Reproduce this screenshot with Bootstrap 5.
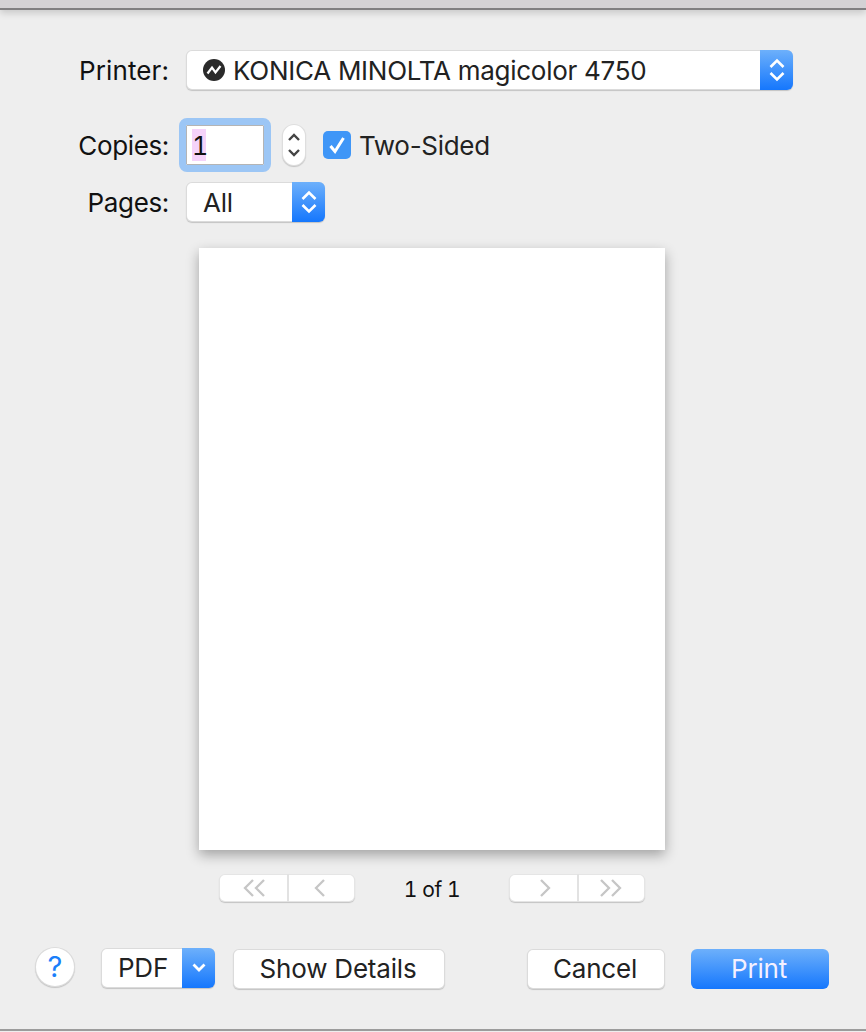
<!DOCTYPE html>
<html lang="en">
  <head>
    <meta charset="UTF-8" />
    <meta name="viewport" content="width=device-width, initial-scale=1.0" />
    <link href="https://cdn.jsdelivr.net/npm/bootstrap@5.3.2/dist/css/bootstrap.min.css" rel="stylesheet" />
    <title>Print</title>
    <style>
      html, body { height: 100%; }
      body {
        background: #eeeeee;
        color: #222;
        font-family: Inter, "Liberation Sans", sans-serif;
        font-size: 26px;
        overflow: hidden;
      }
      .sheet { height: 1032px; }
      .title-strip {
        height: 10px;
        background: #d4d2d5;
        border-bottom: 2px solid #807f81;
        box-shadow: 0 3px 7px rgba(0, 0, 0, 0.16);
      }
      .form-rows { padding-top: 40px; }
      .field-label {
        width: 169px;
        text-align: right;
        color: #111;
        flex: none;
        margin-right: 17px;
        letter-spacing: -0.35px;
      }
      .label-wide { letter-spacing: 0.1px; }
      .row-printer { height: 40px; margin-bottom: 35px; }
      .row-copies { height: 40px; margin-bottom: 17px; }
      .row-pages { height: 40px; margin-bottom: 26px; }
      .mac-control {
        background: #fff;
        border-radius: 6px;
        box-shadow: inset 0 0 0 1px rgba(0, 0, 0, 0.14), 0 1px 1px rgba(0, 0, 0, 0.18);
        height: 40px;
      }
      .popup-wide { width: 607px; }
      .popup-small { width: 139px; }
      .popup-text { padding-left: 17px; letter-spacing: -0.27px; white-space: nowrap; }
      .blue-cap {
        width: 33px;
        background: linear-gradient(#6db0fb, #1577fd);
        border-radius: 0 6px 6px 0;
        flex: none;
      }
      .copies-wrap {
        width: 78px;
        height: 40px;
        background: #fff;
        border: 1px solid #b4b4b4;
        outline: 7px solid #9cc6f5;
        border-radius: 1px;
        padding-left: 5px;
      }
      .sel-one {
        background: #f5d3fa;
        width: 14px;
        height: 32px;
        line-height: 34px;
        color: #111;
        font-size: 25px;
        font-variant-numeric: tabular-nums;
        text-align: center;
        margin-top: 3px;
      }
      .stepper-box {
        width: 24px;
        height: 42px;
        margin-left: 18px;
        background: #fff;
        border-radius: 12px;
        box-shadow: inset 0 0 0 1px rgba(0, 0, 0, 0.13), 0 1px 1px rgba(0, 0, 0, 0.18);
      }
      .tick-box {
        width: 28px;
        height: 28px;
        background: #3f96f7;
        border-radius: 5px;
        margin-left: 17px;
        margin-right: 8px;
      }
      .two-sided { letter-spacing: -0.3px; }
      .paper {
        width: 466px;
        height: 602px;
        margin-left: 199px;
        background: #fff;
        box-shadow: 0 5px 12px rgba(0, 0, 0, 0.32);
      }
      .pager-row { margin-top: 24px; margin-left: 219px; height: 28px; }
      .pager-group {
        width: 136px;
        height: 28px;
        background: #fff;
        border-radius: 6px;
        box-shadow: inset 0 0 0 1px rgba(0, 0, 0, 0.1), 0 1px 1px rgba(0, 0, 0, 0.18);
      }
      .pager-cell { width: 50%; height: 100%; }
      .pager-cell + .pager-cell { border-left: 2px solid #e2e2e2; }
      .page-count {
        width: 154px;
        padding-top: 4px;
        text-align: center;
        font-size: 21px;
        font-variant-numeric: tabular-nums;
        color: #111;
        letter-spacing: -0.4px;
      }
      .footer-row { margin-top: 45px; height: 42px; padding-left: 35px; }
      .help-disc {
        width: 40px;
        height: 40px;
        background: #fff;
        color: #1a7ffa;
        border-radius: 50%;
        box-shadow: inset 0 0 0 1px rgba(0, 0, 0, 0.14), 0 1px 1px rgba(0, 0, 0, 0.18);
        font-size: 29px;
        line-height: 40px;
        text-align: center;
        margin-right: 26px;
      }
      .pdf-menu { width: 114px; margin-right: 18px; margin-top: 1px; }
      .pdf-label { flex: 1; padding-left: 3px; padding-bottom: 1px; text-align: center; letter-spacing: -0.2px; }
      .push-btn {
        height: 40px;
        background: #fff;
        border: 0;
        border-radius: 6px;
        color: #222;
        padding: 0 2px 2px 0;
        font-size: 26px;
        letter-spacing: -0.2px;
        box-shadow: inset 0 0 0 1px rgba(0, 0, 0, 0.14), 0 1px 1px rgba(0, 0, 0, 0.18);
      }
      .btn-details { width: 212px; margin-top: 2px; }
      .btn-cancel { width: 138px; margin-left: 82px; margin-top: 2px; }
      .btn-print {
        width: 138px;
        margin-left: 26px;
        margin-top: 2px;
        color: #f4f0ff;
        background: linear-gradient(#6db0fb, #1577fd);
        box-shadow: none;
      }
      .bottom-line { height: 2px; background: #9c9c9c; margin-top: 40px; }
    </style>
  </head>

  <body>
    <div class="sheet d-flex flex-column">
      <div class="title-strip"></div>

      <div class="form-rows">
        <div class="row-printer d-flex align-items-center">
          <div class="field-label label-wide">Printer:</div>
          <div class="mac-control popup-wide d-flex align-items-stretch">
            <div class="flex-grow-1 d-flex align-items-center popup-text">
              <svg class="me-2 flex-shrink-0" width="22" height="22" viewBox="0 0 22 22">
                <circle cx="11" cy="11" r="11" fill="#2a2a2a" />
                <path d="M4.5 14.5 9 8.5l3.5 5L17.5 7" fill="none" stroke="#fff" stroke-width="2.2" />
              </svg>
              <span>KONICA MINOLTA magicolor 4750</span>
            </div>
            <div class="blue-cap d-flex align-items-center justify-content-center">
              <svg width="16" height="26" viewBox="0 0 16 26">
                <path d="M1.5 10 8 3.5l6.5 6.5M1.5 16 8 22.5l6.5-6.5" fill="none" stroke="#fff" stroke-width="2.6" />
              </svg>
            </div>
          </div>
        </div>

        <div class="row-copies d-flex align-items-center">
          <div class="field-label">Copies:</div>
          <div class="copies-wrap"><div class="sel-one">1</div></div>
          <div class="stepper-box d-flex align-items-center justify-content-center">
            <svg width="14" height="30" viewBox="0 0 14 30">
              <path d="M2 10 7 5l5 5M2 20l5 5 5-5" fill="none" stroke="#444" stroke-width="2.4" />
            </svg>
          </div>
          <div class="tick-box d-flex align-items-center justify-content-center">
            <svg width="20" height="20" viewBox="0 0 20 20">
              <path d="M3.5 11 8 16.5 16.5 3" fill="none" stroke="#fff" stroke-width="3" />
            </svg>
          </div>
          <div class="two-sided">Two-Sided</div>
        </div>

        <div class="row-pages d-flex align-items-center">
          <div class="field-label">Pages:</div>
          <div class="mac-control popup-small d-flex align-items-stretch">
            <div class="flex-grow-1 d-flex align-items-center popup-text">All</div>
            <div class="blue-cap d-flex align-items-center justify-content-center">
              <svg width="16" height="26" viewBox="0 0 16 26">
                <path d="M1.5 10 8 3.5l6.5 6.5M1.5 16 8 22.5l6.5-6.5" fill="none" stroke="#fff" stroke-width="2.6" />
              </svg>
            </div>
          </div>
        </div>
      </div>

      <div class="paper"></div>

      <div class="pager-row d-flex align-items-center">
        <div class="pager-group d-flex">
          <div class="pager-cell d-flex align-items-center justify-content-center ps-1">
            <svg width="24" height="18" viewBox="0 0 24 18">
              <path d="M10 1 2 9l8 8M21 1l-8 8 8 8" fill="none" stroke="#c6c6c6" stroke-width="2.3" />
            </svg>
          </div>
          <div class="pager-cell d-flex align-items-center justify-content-center pe-1">
            <svg width="12" height="18" viewBox="0 0 12 18">
              <path d="M10 1 2 9l8 8" fill="none" stroke="#c6c6c6" stroke-width="2.3" />
            </svg>
          </div>
        </div>
        <div class="page-count">1 of 1</div>
        <div class="pager-group d-flex">
          <div class="pager-cell d-flex align-items-center justify-content-center ps-1">
            <svg width="12" height="18" viewBox="0 0 12 18">
              <path d="m2 1 8 8-8 8" fill="none" stroke="#c6c6c6" stroke-width="2.3" />
            </svg>
          </div>
          <div class="pager-cell d-flex align-items-center justify-content-center pe-1">
            <svg width="24" height="18" viewBox="0 0 24 18">
              <path d="m3 1 8 8-8 8M14 1l8 8-8 8" fill="none" stroke="#c6c6c6" stroke-width="2.3" />
            </svg>
          </div>
        </div>
      </div>

      <div class="footer-row d-flex align-items-start">
        <div class="help-disc">?</div>
        <div class="mac-control pdf-menu d-flex align-items-stretch">
          <div class="pdf-label align-self-center">PDF</div>
          <div class="blue-cap d-flex align-items-center justify-content-center">
            <svg width="16" height="12" viewBox="0 0 16 12">
              <path d="m2.5 2.5 5.5 5.5 5.5-5.5" fill="none" stroke="#fff" stroke-width="2.8" />
            </svg>
          </div>
        </div>
        <button class="btn push-btn btn-details">Show Details</button>
        <button class="btn push-btn btn-cancel">Cancel</button>
        <button class="btn push-btn btn-print">Print</button>
      </div>

      <div class="bottom-line"></div>
    </div>
    <script src="https://cdn.jsdelivr.net/npm/bootstrap@5.3.2/dist/js/bootstrap.bundle.min.js"></script>
  </body>
</html>
